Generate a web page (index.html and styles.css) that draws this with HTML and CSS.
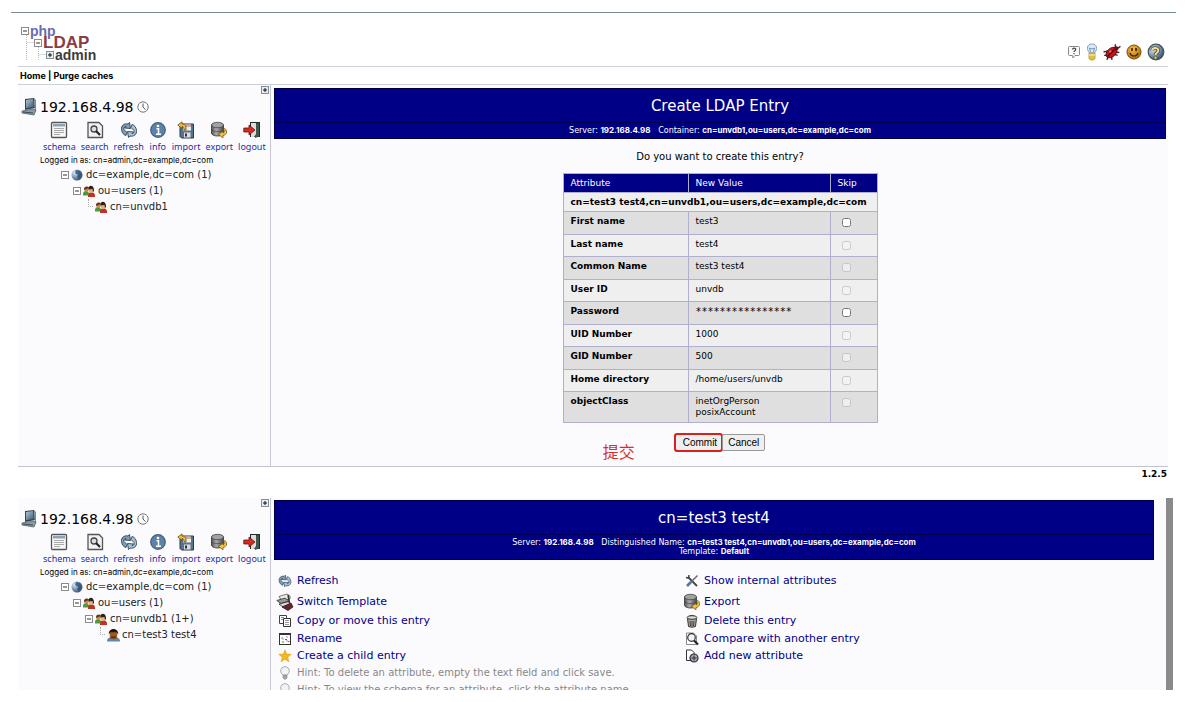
FILE: index.html
```html
<!DOCTYPE html>
<html lang="en">
<head>
<meta charset="utf-8">
<title>phpLDAPadmin</title>
<link rel="stylesheet" href="styles.css">
</head>
<body>
<svg class="defs" aria-hidden="true">
  <defs>
    <linearGradient id="g-steel" x1="0" y1="0" x2="1" y2="1"><stop offset="0" stop-color="#b4c9d8"/><stop offset="1" stop-color="#35546e"/></linearGradient>
    <linearGradient id="g-metal" x1="0" y1="0" x2="1" y2="0"><stop offset="0" stop-color="#555"/><stop offset=".4" stop-color="#aaa"/><stop offset="1" stop-color="#484848"/></linearGradient>
    <radialGradient id="g-globe" cx=".3" cy=".3" r=".8"><stop offset="0" stop-color="#d8ecfb"/><stop offset="1" stop-color="#284a72"/></radialGradient>
    <radialGradient id="g-smile" cx=".4" cy=".3" r=".7"><stop offset="0" stop-color="#f5bd45"/><stop offset="1" stop-color="#b36c05"/></radialGradient>
  </defs>
  <symbol id="i-server" viewBox="0 0 16 18"><path d="M4 1l9-1 1 10-10 2z" fill="#37444d"/><path d="M5 2l7-1 1 8-8 1z" fill="url(#g-steel)"/><path d="M13 0l2 2v11l-1 1z" fill="#7a8c96"/><path d="M1 13l11-2 3 1-2 5-12-2z" fill="#8b9aa3" stroke="#526570" stroke-width=".8"/><path d="M2 14l10 1" stroke="#3c4b54"/></symbol>
  <symbol id="i-clock" viewBox="0 0 12 12"><circle cx="6" cy="6" r="5.2" fill="#fdfdfd" stroke="#777"/><path d="M6 2.5V6l2.4 2.6" fill="none" stroke="#555"/></symbol>
  <symbol id="i-schema" viewBox="0 0 18 18"><rect x="1.5" y="1.5" width="15" height="15" rx="1" fill="#f7f7f7" stroke="#555" stroke-width="1.3"/><rect x="3" y="3" width="12" height="2.5" fill="#8da3b5"/><path d="M4 7.5h10M4 9.5h10M4 11.500h10M4 13.500h6" stroke="#aaa"/></symbol>
  <symbol id="i-search" viewBox="0 0 18 18"><path d="M2 1.500h11l3.500 3.500v11.500H2z" fill="#f1f1f1" stroke="#555" stroke-width="1.300"/><circle cx="8" cy="8" r="3" fill="#ddd" stroke="#444" stroke-width="1.300"/><path d="M10 10l4 4" stroke="#222" stroke-width="2.200"/></symbol>
  <symbol id="i-refresh" viewBox="0 0 18 18"><path d="M1.500 8.500C1 5 4 2 8 3l1.500-1.500 1 6-6-.5L6 5.500C4 5.500 3.800 7 4 8.500l3 3-1 3C3.500 14 1.800 11.500 1.500 8.500z" fill="#7e9fb9" stroke="#2c4053" stroke-width=".9"/><path d="M16.500 9.500c.5 3.500-2.500 6.500-6.500 5.500l-1.500 1.500-1-6 6 .5-1.500 1.500c2 0 2.200-1.500 2-3l-3-3 1-3c2.500.5 4.200 3 4.500 6z" fill="#a9c3d6" stroke="#2c4053" stroke-width=".9"/></symbol>
  <symbol id="i-info" viewBox="0 0 18 18"><circle cx="9" cy="9" r="7.300" fill="#5c82aa" stroke="#4a5f77" stroke-width="1.200"/><circle cx="9" cy="5" r="1.300" fill="#fff"/><path d="M7.500 7.800h2v5M7 13.300h5" stroke="#fff" stroke-width="1.500" fill="none"/></symbol>
  <symbol id="i-import" viewBox="0 0 18 18"><path d="M3 3h13.500v14H4.500L3 15.500z" fill="#58738c" stroke="#2f3b46"/><rect x="6" y="3.500" width="8" height="6" fill="#eee"/><path d="M6 5h8" stroke="#c0604a"/><rect x="7" y="11.500" width="6.500" height="5" fill="#ddd"/><rect x="8" y="12.500" width="2" height="3" fill="#333"/><path d="M9 9V6c0-2-2-3-4-3V.8L.8 4 5 7.500V5.500c1.500 0 2 1.500 2 3.500z" fill="#f0bd3c" stroke="#6b4c0a" stroke-width=".8"/></symbol>
  <symbol id="i-export" viewBox="0 0 18 18"><path d="M1.500 4v8c0 4 12 4 12 0V4z" fill="url(#g-metal)" stroke="#333" stroke-width=".8"/><ellipse cx="7.500" cy="4" rx="6" ry="2.700" fill="#a2a2a2" stroke="#444" stroke-width=".8"/><path d="M1.500 8c0 3.500 12 3.500 12 0" fill="none" stroke="#444" stroke-width=".7"/><path d="M15 7.500c3 3 1.500 6.500-2 7v2.300L8.500 13.500 13 10.200V12c1.500-.5 2-2 .7-3.500z" fill="#f2c448" stroke="#79580d" stroke-width=".8"/></symbol>
  <symbol id="i-logout" viewBox="0 0 18 18"><rect x="7" y="1" width="10" height="15" fill="#232b27"/><path d="M12 3l4-1.500v14L12 17z" fill="#3d5a4d"/><path d="M8 2h5v11l-2 3H8z" fill="#ddd"/><path d="M.8 7H6V4l6 5-6 5v-3H.8z" fill="#d92a20" stroke="#6b0f0a" stroke-width=".8"/></symbol>
  <symbol id="i-minus" viewBox="0 0 8 8"><rect x=".5" y=".5" width="7" height="7" fill="#fff" stroke="#8b8b8b"/><path d="M2 4h4" stroke="#333"/></symbol>
  <symbol id="i-plus" viewBox="0 0 8 8"><rect x=".5" y=".5" width="7" height="7" fill="#e6eef2" stroke="#82929c"/><path d="M2 4h4M4 2v4" stroke="#111"/></symbol>
  <symbol id="i-globe" viewBox="0 0 12 12"><circle cx="6" cy="6" r="5.500" fill="url(#g-globe)"/><path d="M5 1l4 1 2 4-3 4-2-2 1-2-3-2z" fill="#2b486c" opacity=".75"/></symbol>
  <symbol id="i-users" viewBox="0 0 12 12"><path d="M0 9c0-4 6-4 6 0v1.500H0z" fill="#4c9a39"/><circle cx="3.500" cy="4.500" r="2.300" fill="#c98b52"/><path d="M1 5c-.5-4 4-4.500 5-2L3.500 4z" fill="#6a3516"/><path d="M5 10.500c0-4.500 7-4.500 7 0V12H5z" fill="#c33025"/><ellipse cx="8" cy="5" rx="2.400" ry="3" fill="#e2b27c"/><path d="M5.500 4.500C4.500-.5 11.500-1 11 6l-1 1-.5-3z" fill="#2e2017"/></symbol>
  <symbol id="i-person" viewBox="0 0 14 14"><path d="M0 14c0-4 3-4.500 7-4.500s7 .5 7 4.500z" fill="#5f85b0"/><rect x="3" y="2.500" width="8" height="9" rx="3" fill="#9b5a20"/><path d="M2 6.500C1-1.500 13-1.500 12 6.500L10.500 4h-7z" fill="#1f1712"/><path d="M4.500 8.500h5v2h-5z" fill="#5c3414"/></symbol>
  <symbol id="i-quest" viewBox="0 0 14 14"><path d="M2.500 1.500h9q1 0 1 1v7q0 1-1 1H8L6 13l-.5-2.500h-3q-1 0-1-1v-7q0-1 1-1z" fill="#fafafa" stroke="#888"/><path d="M5.500 4.500c0-2 3.300-1.800 3.200 0C8.700 5.800 7 5.500 7 7M7 8v1.200" fill="none" stroke="#444" stroke-width="1.200"/></symbol>
  <symbol id="i-bulb" viewBox="0 0 12 18"><path d="M3.500 10C0 6 1 1 6 1s6 5 2.500 9z" fill="#dcebf7" stroke="#87a1b8"/><path d="M4.500 9L3.500 5l2.500 1 2.500-1-1 4" fill="none" stroke="#6e93bd"/><path d="M3 10h6v5.500L7.500 17h-3L3 15.500z" fill="#e3c044" stroke="#a1862a" stroke-width=".7"/><path d="M3 12h6" stroke="#fff3b5"/></symbol>
  <symbol id="i-bug" viewBox="0 0 16 16"><path d="M.5 8l4-1M1 11h3M3.500 15l1-3M8 15l-.5-3M13 11l-3-1M14.500 8.500L11 8M6 5.500L7.500 7M11 5V1M12 5.500L15.500 3" stroke="#333" stroke-width="1.300"/><ellipse cx="7.500" cy="8.500" rx="5.600" ry="3.700" transform="rotate(-42 7.500 8.500)" fill="#c4141c" stroke="#5b0508" stroke-width=".8"/><circle cx="11.800" cy="4.800" r="1.900" fill="#7a0a10"/><path d="M4 12l6-6" stroke="#39050a"/><circle cx="6.500" cy="7.500" r="1" fill="#f5767a"/></symbol>
  <symbol id="i-smile" viewBox="0 0 16 16"><circle cx="8" cy="8" r="7" fill="url(#g-smile)" stroke="#7a4d09"/><path d="M6 4v3M10 4v3" stroke="#2a1a00" stroke-width="1.500"/><path d="M4 9c1 4 7 4 8 0" fill="none" stroke="#3a2400" stroke-width="1.200"/></symbol>
  <symbol id="i-help" viewBox="0 0 18 18"><circle cx="9" cy="9" r="7.800" fill="url(#g-globe)" stroke="#44545f" stroke-width="1.200"/><path d="M5 7.500c0-3.500 6.500-3.500 6.300 0C11.300 10 8.500 9.500 8.500 12M8.500 13.500V16" fill="none" stroke="#4c421c" stroke-width="3.400"/><path d="M5 7.500c0-3.500 6.500-3.500 6.300 0C11.300 10 8.500 9.500 8.500 12M8.500 13.700v2" fill="none" stroke="#f3df9a" stroke-width="2"/></symbol>
  <symbol id="i-template" viewBox="0 0 18 18"><path d="M3 3.500L11 1l3 2v3L6 8z" fill="#eee" stroke="#555" stroke-width=".8"/><path d="M.8 7.500L9 5l4 3-8 2.500z" fill="#999" stroke="#333" stroke-width=".8"/><path d="M3 11l10-2.500 2 3.500-8 2z" fill="#ddd" stroke="#222" stroke-width=".8"/><path d="M6 14l9-4 2 4-5 3.500z" fill="#6d2029" stroke="#222" stroke-width=".8"/><path d="M12 2l1.500 8" stroke="#333" stroke-width="1.500"/></symbol>
  <symbol id="i-copy" viewBox="0 0 14 14"><path d="M1.500 1.500h7v8h-7z" fill="#fff" stroke="#444"/><path d="M3 3.500h3M3 5.500h2" stroke="#888"/><path d="M5.500 4.500h7v8h-7z" fill="#fff" stroke="#333"/><path d="M7 6.500h4M7 8.500h4M7 10.500h4" stroke="#999"/></symbol>
  <symbol id="i-rename" viewBox="0 0 14 14"><rect x="1.500" y="1.500" width="11" height="11" fill="#fff" stroke="#333"/><path d="M1 2h12" stroke="#333" stroke-width="2"/><path d="M4 5v2h2M8 5h2M9 8v2" stroke="#999" fill="none"/><path d="M7 7.500h2" stroke="#c33"/><path d="M10 9.500h1.500M4 10h2" stroke="#292"/></symbol>
  <symbol id="i-star" viewBox="0 0 14 14"><path d="M7 .8l1.700 4.300 4.600.2-3.600 2.900 1.300 4.600L7 10.200l-4 2.600 1.300-4.600L.7 5.300l4.600-.2z" fill="#f5b51d" stroke="#dc9812" stroke-width=".5"/></symbol>
  <symbol id="i-hint" viewBox="0 0 12 14"><circle cx="6" cy="5" r="4.300" fill="#f1f4f6" stroke="#a3adb4"/><path d="M4 9h4v3l-2 1.500L4 12z" fill="#aaa295" stroke="#8c8880" stroke-width=".6"/></symbol>
  <symbol id="i-tools" viewBox="0 0 14 14"><path d="M3 3l9 9" stroke="#444" stroke-width="1.800"/><path d="M12.500 1.500L5 9" stroke="#666" stroke-width="1.500"/><path d="M6 8l-4 4" stroke="#4a7ba5" stroke-width="2.600"/><path d="M1 3.500L3.500 4 4 1" stroke="#444" stroke-width="1.500" fill="none"/></symbol>
  <symbol id="i-trash" viewBox="0 0 14 14"><path d="M2.500 4.500h9l-1 8q-3.500 1.500-7 0z" fill="#aaa99d" stroke="#33332d"/><ellipse cx="7" cy="3.500" rx="5" ry="1.800" fill="#ddd" stroke="#333"/><path d="M5 1.500h4M5 7l.5 5M7 7v5M9 7l-.5 5" stroke="#444"/></symbol>
  <symbol id="i-compare" viewBox="0 0 14 14"><path d="M1.500 1h7l3 3v8.500h-10z" fill="#fff" stroke="#888"/><circle cx="6.500" cy="5.500" r="3.800" fill="#eef3f5" stroke="#333" stroke-width="1.200"/><path d="M9 8.500l4 4" stroke="#222" stroke-width="2.200"/></symbol>
  <symbol id="i-add" viewBox="0 0 14 14"><path d="M1.500 1h5l2.500 2.500v8H1.500z" fill="#fff" stroke="#333"/><circle cx="9" cy="9" r="4" fill="#aaa7b5" stroke="#2c2c33" stroke-width="1.200"/><path d="M9 6.500v5M6.500 9h5" stroke="#2c2c33"/></symbol>
</svg>

<div class="app">
  <header class="top">
    <div class="logo" role="img" aria-label="phpLDAPadmin">
      <svg class="lines" width="26" height="36"><path d="M5.500 8v28M5.500 17.500H13M17.500 20v16M17.500 29.500H25" fill="none" stroke="#bbb" stroke-dasharray="1 1"/></svg>
      <div class="logo-row php"><svg class="box"><use href="#i-minus"/></svg><span>php</span></div>
      <div class="logo-row ldap"><svg class="box"><use href="#i-minus"/></svg><span>LDAP</span></div>
      <div class="logo-row adm"><svg class="box"><use href="#i-plus"/></svg><span>admin</span></div>
    </div>
    <nav class="quick" aria-label="Help">
      <a href="#" aria-label="Hint"><svg width="14" height="14"><use href="#i-quest"/></svg></a>
      <a href="#" aria-label="Feature request"><svg width="12" height="18"><use href="#i-bulb"/></svg></a>
      <a href="#" aria-label="Report a bug"><svg width="18" height="18"><use href="#i-bug"/></svg></a>
      <a href="#" aria-label="Donate"><svg width="16" height="16"><use href="#i-smile"/></svg></a>
      <a href="#" aria-label="Help"><svg width="18" height="18"><use href="#i-help"/></svg></a>
    </nav>
  </header>
  <nav class="menu"><a href="#">Home</a> | <a href="#">Purge caches</a></nav>

  <div class="panel first">
    <aside class="side">
      <svg class="expand"><use href="#i-plus"/></svg>
      <h2 class="server"><svg width="16" height="18"><use href="#i-server"/></svg>192.168.4.98<svg width="12" height="12"><use href="#i-clock"/></svg></h2>
      <nav class="tools">
        <a href="#"><svg><use href="#i-schema"/></svg>schema</a>
        <a href="#"><svg><use href="#i-search"/></svg>search</a>
        <a href="#"><svg><use href="#i-refresh"/></svg>refresh</a>
        <a href="#"><svg><use href="#i-info"/></svg>info</a>
        <a href="#"><svg><use href="#i-import"/></svg>import</a>
        <a href="#"><svg><use href="#i-export"/></svg>export</a>
        <a href="#"><svg><use href="#i-logout"/></svg>logout</a>
      </nav>
      <p class="logged">Logged in as: cn=admin,dc=example,dc=com</p>
      <ul class="tree">
        <li class="l1"><svg class="box"><use href="#i-minus"/></svg><svg class="node"><use href="#i-globe"/></svg><a href="#">dc<b>=</b>example<i>,</i>dc<b>=</b>com (1)</a></li>
        <li class="l2"><svg class="box"><use href="#i-minus"/></svg><svg class="node"><use href="#i-users"/></svg><a href="#">ou<b>=</b>users (1)</a></li>
        <li class="l3"><span class="elbow"></span><svg class="node"><use href="#i-users"/></svg><a href="#">cn<b>=</b>unvdb1</a></li>
      </ul>
    </aside>
    <main class="content">
      <div class="banner">
        <h1>Create LDAP Entry</h1>
        <p>Server: <b>192.168.4.98</b> &nbsp; Container: <b>cn=unvdb1,ou=users,dc=example,dc=com</b></p>
      </div>
      <form class="create">
        <p class="ask">Do you want to create this entry?</p>
        <table class="attrs">
          <thead>
            <tr><th>Attribute</th><th>New Value</th><th>Skip</th></tr>
            <tr class="dn"><td colspan="3">cn=test3 test4,cn=unvdb1,ou=users,dc=example,dc=com</td></tr>
          </thead>
          <tbody>
            <tr><th scope="row"><label for="s1">First name</label></th><td>test3</td><td><input type="checkbox" id="s1"></td></tr>
            <tr><th scope="row"><label for="s2">Last name</label></th><td>test4</td><td><input type="checkbox" id="s2" disabled></td></tr>
            <tr><th scope="row"><label for="s3">Common Name</label></th><td>test3 test4</td><td><input type="checkbox" id="s3" disabled></td></tr>
            <tr><th scope="row"><label for="s4">User ID</label></th><td>unvdb</td><td><input type="checkbox" id="s4" disabled></td></tr>
            <tr><th scope="row"><label for="s5">Password</label></th><td class="mask">****************</td><td><input type="checkbox" id="s5"></td></tr>
            <tr><th scope="row"><label for="s6">UID Number</label></th><td>1000</td><td><input type="checkbox" id="s6" disabled></td></tr>
            <tr><th scope="row"><label for="s7">GID Number</label></th><td>500</td><td><input type="checkbox" id="s7" disabled></td></tr>
            <tr><th scope="row"><label for="s8">Home directory</label></th><td>/home/users/unvdb</td><td><input type="checkbox" id="s8" disabled></td></tr>
            <tr><th scope="row"><label for="s9">objectClass</label></th><td>inetOrgPerson<br>posixAccount</td><td><input type="checkbox" id="s9" disabled></td></tr>
          </tbody>
        </table>
        <div class="buttons">
          <div class="group">
            <span class="note" lang="zh">提交</span>
            <button type="button" class="commit">Commit</button><button type="button">Cancel</button>
          </div>
        </div>
      </form>
    </main>
  </div>
  <footer class="version">1.2.5</footer>

  <div class="panel second">
    <aside class="side">
      <svg class="expand"><use href="#i-plus"/></svg>
      <h2 class="server"><svg width="16" height="18"><use href="#i-server"/></svg>192.168.4.98<svg width="12" height="12"><use href="#i-clock"/></svg></h2>
      <nav class="tools">
        <a href="#"><svg><use href="#i-schema"/></svg>schema</a>
        <a href="#"><svg><use href="#i-search"/></svg>search</a>
        <a href="#"><svg><use href="#i-refresh"/></svg>refresh</a>
        <a href="#"><svg><use href="#i-info"/></svg>info</a>
        <a href="#"><svg><use href="#i-import"/></svg>import</a>
        <a href="#"><svg><use href="#i-export"/></svg>export</a>
        <a href="#"><svg><use href="#i-logout"/></svg>logout</a>
      </nav>
      <p class="logged">Logged in as: cn=admin,dc=example,dc=com</p>
      <ul class="tree">
        <li class="l1"><svg class="box"><use href="#i-minus"/></svg><svg class="node"><use href="#i-globe"/></svg><a href="#">dc<b>=</b>example<i>,</i>dc<b>=</b>com (1)</a></li>
        <li class="l2"><svg class="box"><use href="#i-minus"/></svg><svg class="node"><use href="#i-users"/></svg><a href="#">ou<b>=</b>users (1)</a></li>
        <li class="l3"><svg class="box"><use href="#i-minus"/></svg><svg class="node"><use href="#i-users"/></svg><a href="#">cn<b>=</b>unvdb1 (1+)</a></li>
        <li class="l4"><span class="elbow"></span><svg class="node person"><use href="#i-person"/></svg><a href="#">cn<b>=</b>test3 test4</a></li>
      </ul>
    </aside>
    <section class="content">
      <div class="banner">
        <h1>cn=test3 test4</h1>
        <p>Server: <b>192.168.4.98</b> &nbsp; Distinguished Name: <b>cn=test3 test4,cn=unvdb1,ou=users,dc=example,dc=com</b><br>Template: <b>Default</b></p>
      </div>
      <div class="actions">
        <ul>
          <li class="tall"><svg><use href="#i-refresh"/></svg><a href="#">Refresh</a></li>
          <li class="tall"><svg class="big"><use href="#i-template"/></svg><a href="#">Switch Template</a></li>
          <li class="mid"><svg><use href="#i-copy"/></svg><a href="#">Copy or move this entry</a></li>
          <li><svg><use href="#i-rename"/></svg><a href="#">Rename</a></li>
          <li><svg><use href="#i-star"/></svg><a href="#">Create a child entry</a></li>
          <li class="hint"><svg><use href="#i-hint"/></svg>Hint: To delete an attribute, empty the text field and click save.</li>
          <li class="hint"><svg><use href="#i-hint"/></svg>Hint: To view the schema for an attribute, click the attribute name.</li>
        </ul>
        <ul>
          <li class="tall"><svg><use href="#i-tools"/></svg><a href="#">Show internal attributes</a></li>
          <li class="tall"><svg class="big"><use href="#i-export"/></svg><a href="#">Export</a></li>
          <li class="mid"><svg><use href="#i-trash"/></svg><a href="#">Delete this entry</a></li>
          <li><svg><use href="#i-compare"/></svg><a href="#">Compare with another entry</a></li>
          <li><svg><use href="#i-add"/></svg><a href="#">Add new attribute</a></li>
        </ul>
      </div>
    </section>
    <div class="scroll"></div>
  </div>
</div>
</body>
</html>
```
FILE: styles.css
```css
* { box-sizing: border-box; }
body {
  margin: 0;
  background: #fff;
  color: #000;
  font: 10px/12px "DejaVu Sans", Verdana, sans-serif;
}
h1, h2, p, ul { margin: 0; padding: 0; font-weight: normal; }
ul { list-style: none; }
a { color: inherit; text-decoration: none; }
svg { flex: none; }
.defs { position: absolute; width: 0; height: 0; }

.app {
  margin: 12px 21px 0 11px;
  padding: 0 8px 0 7px;
  border-top: 1px solid #7b8c99;
}
.top {
  display: flex;
  justify-content: space-between;
  align-items: flex-end;
  height: 54px;
  padding: 0 3px 5px 3px;
  border-bottom: 1px solid #cfcfdb;
}
.logo {
  position: relative;
  font-family: "Liberation Sans", sans-serif;
  font-weight: bold;
  line-height: 12px;
}
.lines { position: absolute; left: 0; top: 0; }
.logo-row { display: flex; align-items: center; gap: 1px; }
.box { position: relative; width: 8px; height: 8px; }
.php { color: #6b6bad; font-size: 14px; }
.ldap { color: #8c3c42; font-size: 17px; padding-left: 13px; }
.adm { color: #3c3c3c; font-size: 14px; padding-left: 25px; }
.quick { display: flex; align-items: center; gap: 5px; }
.quick svg { display: block; }
.menu {
  height: 18px;
  padding: 0 2px;
  border-bottom: 1px solid #cfcfdb;
  font: bold 9px/17px Inter, sans-serif;
}

.panel { display: flex; background: #fbfbfe; }
.first { border-bottom: 1px solid #c3c3d3; }
.side {
  position: relative;
  flex: 0 0 253px;
  min-width: 0;
  border-right: 1px solid #c8c8d4;
  padding-top: 12px;
}
.expand { position: absolute; top: 1px; right: 1px; width: 8px; height: 8px; }
.server {
  display: flex;
  align-items: center;
  gap: 3px;
  height: 20px;
  padding-left: 3px;
  font-size: 14px;
}
.tools {
  display: flex;
  gap: 5px;
  padding: 4px 0 0 25px;
  font: 9px/15px "Noto Sans", sans-serif;
  color: #2b2ba0;
}
.tools a { display: flex; flex-direction: column; align-items: center; }
.tools svg { width: 18px; height: 18px; }
.logged { padding-left: 22px; font: 8px/13px Inter, sans-serif; }
.tree { padding-left: 43px; color: #222; }
.tree li { display: flex; align-items: center; height: 16px; }
.tree b { color: #5555f0; font-weight: normal; }
.tree i { color: #e02020; font-style: normal; }
.node { width: 12px; height: 12px; margin: 0 3px 0 2px; }
.person { width: 13px; height: 14px; margin-right: 2px; }
.l2 { padding-left: 12px; }
.l3 { padding-left: 24px; }
.l4 { padding-left: 36px; }
.elbow {
  align-self: flex-start;
  width: 5px;
  height: 8px;
  margin-left: 3px;
  border: 1px dotted #aaa;
  border-width: 0 0 1px 1px;
}

.content { flex: 1; min-width: 0; padding: 3px 2px 0 3px; }
.banner {
  border: 1px solid #000040;
  background: #000087;
  color: #fff;
  text-align: center;
}
.banner h1 { font-size: 15px; line-height: 35px; height: 34px; border-bottom: 1px solid #000050; }
.banner p { font-size: 8px; line-height: 9px; padding: 3px 0; }
.banner b { font-family: Inter, sans-serif; }

.ask { padding-top: 12px; text-align: center; }
.attrs {
  margin: 10px auto 0;
  border-collapse: collapse;
  font-size: 9px;
  line-height: 11px;
}
.attrs th, .attrs td {
  border: 1px solid #b0b0cc;
  padding: 4px 7px;
  text-align: left;
  vertical-align: top;
}
.attrs thead th, .attrs thead td { padding: 4px 7px 3px; }
.attrs thead th { background: #000087; color: #fff; font-weight: normal; width: 142px; }
.attrs thead th:first-child { width: 125px; }
.attrs thead th:last-child { width: 47px; }
.attrs .dn td { background: #efefef; font-weight: bold; }
.attrs tbody tr { height: 23px; background: #efefef; }
.attrs tbody tr:nth-child(odd) { background: #dfdfdf; }
.attrs tbody tr:nth-child(even) { height: 22px; }
.attrs input { display: block; width: 9px; height: 9px; margin: 2px 0 0 4px; }
.attrs .mask { font: 10px/11px "DejaVu Sans Mono", monospace; }

.buttons {
  display: flex;
  justify-content: center;
  padding: 11px 0 15px;
}
.group { position: relative; display: flex; }
button {
  height: 17px;
  padding: 0 5px;
  border: 1px solid #999;
  border-radius: 2px;
  background: #efefef;
  color: #000;
  font: 10px/14px "Liberation Sans", sans-serif;
}
.commit { outline: 2px solid #d9201c; outline-offset: -1px; border-color: #d9201c; padding: 0 4px 0 7px; }
.note {
  position: absolute;
  right: calc(100% + 40px);
  top: 7px;
  color: #d9302c;
  font: 16px/20px "Noto Sans CJK SC", sans-serif;
  white-space: nowrap;
}
.version { padding: 1px 1px 0 0; text-align: right; font-size: 9px; font-weight: bold; }

.second { margin: 18px -5px 0 0; height: 192px; overflow: hidden; }
.second .side { padding-top: 11px; }
.second .content { padding: 2px 12px 0 3px; }
.actions { display: grid; grid-template-columns: 407px 1fr; padding-top: 10px; font-size: 11px; }
.actions li {
  display: flex;
  align-items: center;
  gap: 5px;
  height: 17px;
  padding-left: 4px;
  color: #000087;
  white-space: nowrap;
}
.actions .tall { height: 21px; }
.actions .mid { height: 18px; }
.actions .hint { height: 17px; color: #888; font-size: 10px; }
.actions svg { width: 14px; height: 14px; }
.actions .big { width: 18px; height: 18px; margin: 0 -2px; }
.scroll { flex: 0 0 7px; background: #8a8a8a; }
```
